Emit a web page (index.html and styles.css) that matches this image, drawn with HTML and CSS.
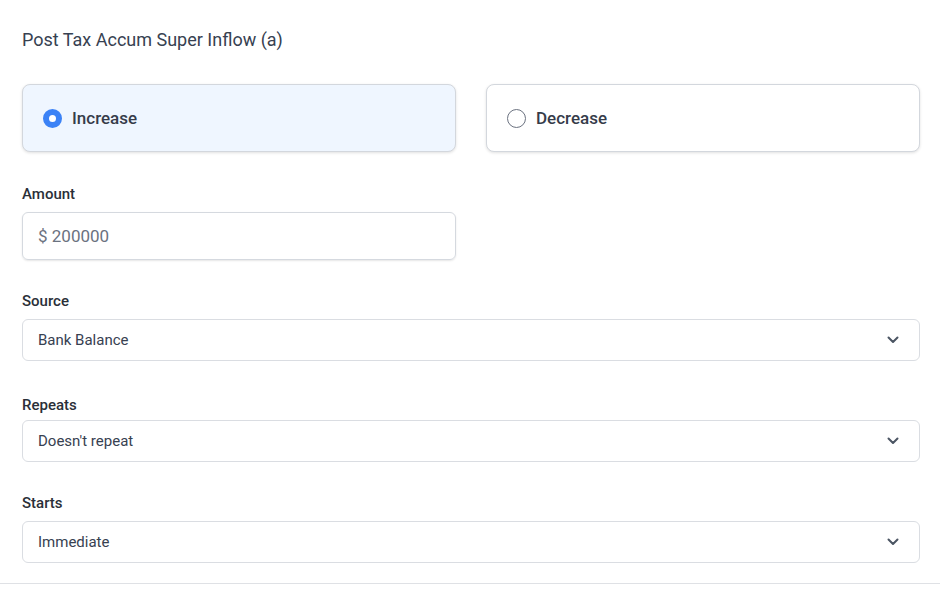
FILE: index.html
```html
<!DOCTYPE html>
<html lang="en">
<head>
<meta charset="utf-8">
<title>Post Tax Accum Super Inflow</title>
<link rel="stylesheet" href="styles.css">
</head>
<body>
<div class="form">
  <h2 class="title">Post Tax Accum Super Inflow (a)</h2>
  <div class="choices">
    <label class="choice selected">
      <span class="radio checked"></span>
      <span class="choice-text">Increase</span>
    </label>
    <label class="choice">
      <span class="radio"></span>
      <span class="choice-text">Decrease</span>
    </label>
  </div>
  <div class="fields">
    <div class="field">
      <div class="label">Amount</div>
      <div class="input half">$ 200000</div>
    </div>
    <div class="field">
      <div class="label">Source</div>
      <div class="select"><span>Bank Balance</span>
        <svg class="chev" width="12" height="8" viewBox="0 0 12 8"><path d="M1.5 1.5 L6 6 L10.5 1.5" fill="none" stroke="#4b5563" stroke-width="2" stroke-linecap="round" stroke-linejoin="round"/></svg>
      </div>
    </div>
    <div class="field">
      <div class="label label-low">Repeats</div>
      <div class="select"><span>Doesn't repeat</span>
        <svg class="chev" width="12" height="8" viewBox="0 0 12 8"><path d="M1.5 1.5 L6 6 L10.5 1.5" fill="none" stroke="#4b5563" stroke-width="2" stroke-linecap="round" stroke-linejoin="round"/></svg>
      </div>
    </div>
    <div class="field">
      <div class="label">Starts</div>
      <div class="select"><span>Immediate</span>
        <svg class="chev" width="12" height="8" viewBox="0 0 12 8"><path d="M1.5 1.5 L6 6 L10.5 1.5" fill="none" stroke="#4b5563" stroke-width="2" stroke-linecap="round" stroke-linejoin="round"/></svg>
      </div>
    </div>
  </div>
</div>
</body>
</html>
```

FILE: styles.css
```css
html, body {
  margin: 0;
  padding: 0;
  background: #ffffff;
  font-family: Roboto, "Liberation Sans", Arial, sans-serif;
}

.form {
  padding: 28px 20px 20px 22px;
  border-bottom: 1px solid #dfe1e5;
}

.title {
  margin: 0;
  font-size: 18px;
  line-height: 24px;
  font-weight: 400;
  color: #374151;
}

.choices {
  margin-top: 32px;
  display: grid;
  grid-template-columns: 1fr 1fr;
  gap: 30px;
}

.choice {
  box-sizing: border-box;
  height: 68px;
  display: flex;
  align-items: center;
  gap: 10px;
  padding-left: 20px;
  border: 1px solid #d3d7dd;
  border-radius: 8px;
  background: #ffffff;
  box-shadow: 0 1px 3px rgba(0, 0, 0, 0.12);
}

.choice.selected {
  background: #eff6ff;
}

.radio {
  box-sizing: border-box;
  width: 19px;
  height: 19px;
  border-radius: 50%;
  border: 1.5px solid #6b7280;
  background: #ffffff;
  flex: none;
}

.radio.checked {
  border: 6px solid #3b82f6;
  background: #ffffff;
}

.choice-text {
  font-size: 17px;
  font-weight: 500;
  color: #363c4a;
}

.fields {
  margin-top: 32px;
  display: flex;
  flex-direction: column;
  gap: 31px;
}

.field {
  display: flex;
  flex-direction: column;
  gap: 8px;
}

.label {
  font-size: 15px;
  line-height: 20px;
  font-weight: 500;
  color: #2a2f38;
}

.label-low {
  margin-top: 3px;
  margin-bottom: -3px;
}

.input {
  box-sizing: border-box;
  height: 48px;
  display: flex;
  align-items: center;
  padding-left: 15px;
  border: 1px solid #d5d9df;
  border-radius: 6px;
  font-size: 17px;
  color: #6b7280;
  box-shadow: 0 1px 2px rgba(0, 0, 0, 0.1);
}

.input.half {
  width: 434px;
}

.select {
  box-sizing: border-box;
  height: 42px;
  display: flex;
  align-items: center;
  justify-content: space-between;
  padding: 0 20px 0 15px;
  border: 1px solid #dadde2;
  border-radius: 6px;
  font-size: 15px;
  color: #374151;
}

.chev {
  display: block;
}
```
